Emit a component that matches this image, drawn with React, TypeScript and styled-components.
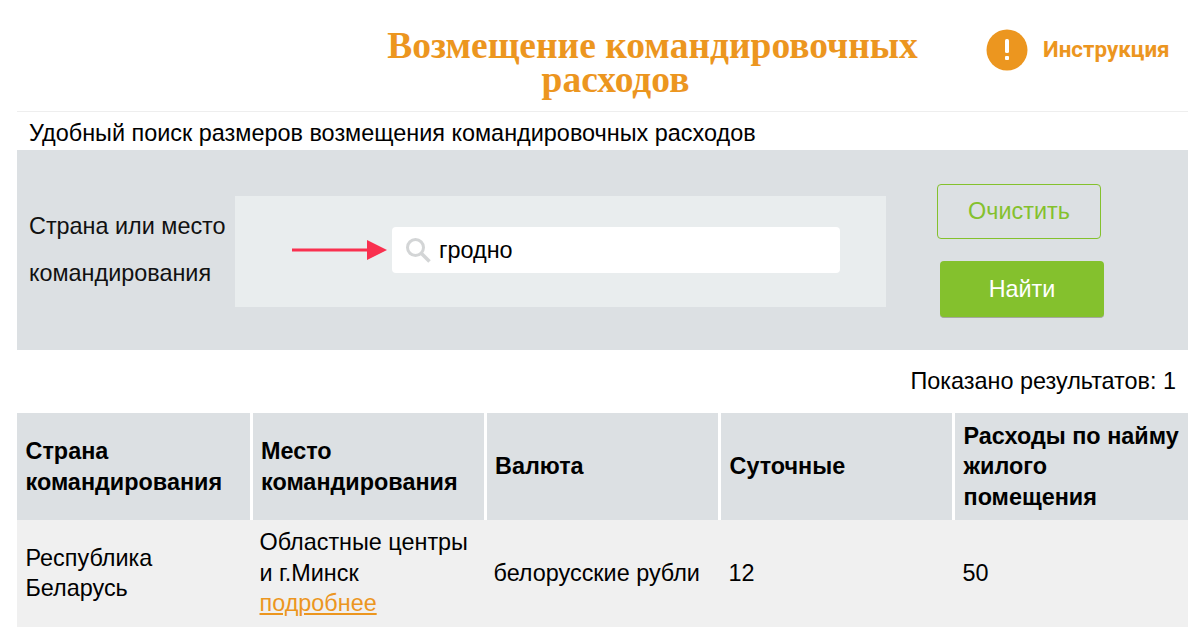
import React from "react";
import styled, { createGlobalStyle } from "styled-components";

const Global = createGlobalStyle`
  html, body { margin: 0; padding: 0; background: #fff; }
  body { font-family: "Liberation Sans", Arial, sans-serif; color: #000; overflow: hidden; }
`;
const Page = styled.div`
  width: 1171px;
  margin-left: 17px;
`;
const Header = styled.header`
  height: 111px;
  border-bottom: 1px solid #eeeeee;
  display: flex;
  box-sizing: content-box;
`;
const Title = styled.h1`
  margin: 29px 0 0 0;
  width: 953px;
  padding-left: 318px;
  box-sizing: border-box;
  text-align: center;
  font: bold 37.5px/34px "Liberation Serif", "Times New Roman", serif;
  color: #ec961f;
`;
const TitleTail = styled.span`
  display: block;
  padding-right: 74px;
`;
const Instruction = styled.a`
  display: flex;
  align-items: center;
  gap: 15px;
  height: 42px;
  margin-top: 29px;
  margin-left: 16px;
  font: bold 22.4px/38px "Roboto", "Liberation Sans", sans-serif;
  color: #ec961f;
`;
const InstructionLabel = styled.span`
  margin-top: -2px;
`;
const Subtitle = styled.div`
  font-size: 23.43px;
  line-height: 42px;
  padding-left: 12px;
  height: 38px;
`;
const SearchPanel = styled.section`
  background: #dce0e3;
  height: 200px;
  padding-top: 2px;
  display: flex;
  align-items: center;
  box-sizing: border-box;
`;
const Label = styled.label`
  width: 218px;
  padding: 0 0 2px 12px;
  box-sizing: border-box;
  font-size: 23.4px;
  line-height: 47px;
  color: #111;
`;
const InputArea = styled.div`
  width: 651px;
  height: 111px;
  background: #e9edee;
  display: flex;
  align-items: center;
  gap: 5px;
  padding: 0 0 2px 57px;
  box-sizing: border-box;
`;
const InputBox = styled.div`
  width: 448px;
  height: 46px;
  background: #fff;
  border-radius: 4px;
  display: flex;
  align-items: center;
  gap: 8px;
  padding-left: 13px;
  box-sizing: border-box;
  font-size: 23.4px;
`;
const Buttons = styled.div`
  display: flex;
  flex-direction: column;
  margin-left: 51px;
  height: 134px;
`;
const ClearButton = styled.button`
  width: 164px;
  height: 55px;
  background: transparent;
  border: 1px solid #84c12d;
  border-radius: 4px;
  color: #84c12d;
  font: 23.4px "Liberation Sans", sans-serif;
`;
const FindButton = styled.button`
  width: 164px;
  height: 57px;
  margin: 22px 0 0 3px;
  background: #84c12d;
  border: 0;
  border-bottom: 1px solid #a5a89e;
  border-radius: 4px;
  color: #fff;
  font: 23.4px "Liberation Sans", sans-serif;
`;
const Results = styled.div`
  height: 63px;
  font-size: 23.4px;
  line-height: 62px;
  text-align: right;
  padding-right: 12px;
`;
const Table = styled.table`
  width: 1171px;
  table-layout: fixed;
  border-collapse: separate;
  border-spacing: 0;
  font-size: 23.4px;
  line-height: 30.5px;
`;
const Column = styled.col<{ $w: number }>`
  width: ${(p) => p.$w}px;
`;
const HeadCell = styled.th`
  background: #dce0e3;
  height: 107px;
  padding: 0 6px 0 8.5px;
  text-align: left;
  font-weight: bold;
  border-right: 3px solid #fff;
  box-sizing: border-box;
  &:nth-child(2), &:nth-child(3) { padding-left: 8px; }
  &:last-child { border-right: 0; }
`;
const Cell = styled.td`
  background: #f0f0f0;
  height: 107px;
  padding: 0 6px 0 8.5px;
  box-sizing: border-box;
  &:nth-child(-n + 2) { padding-bottom: 1px; }
  &:nth-child(2), &:nth-child(3) { padding-left: 6.5px; }
  &:nth-child(n + 4) { padding-left: 7.5px; }
`;
const MoreLink = styled.a`
  color: #ec961f;
  text-decoration: underline;
`;

export default function App() {
  return (
    <Page>
      <Global />
      <Header>
        <Title>
          Возмещение командировочных
          <TitleTail>расходов</TitleTail>
        </Title>
        <Instruction>
          <svg width="42" height="42" viewBox="0 0 42 42">
            <circle cx="21" cy="21" r="20.5" fill="#ec961f" />
            <rect x="19" y="10" width="4" height="14" rx="1.5" fill="#fff" />
            <rect x="19" y="27" width="4" height="4" rx="1" fill="#fff" />
          </svg>
          <InstructionLabel>Инструкция</InstructionLabel>
        </Instruction>
      </Header>
      <Subtitle>Удобный поиск размеров возмещения командировочных расходов</Subtitle>
      <SearchPanel>
        <Label>Страна или место командирования</Label>
        <InputArea>
          <svg width="95" height="20" viewBox="0 0 95 20">
            <rect x="0" y="8.5" width="76" height="3" fill="#f9304f" />
            <polygon points="75,0 95,10 75,20" fill="#f9304f" />
          </svg>
          <InputBox>
            <svg width="26" height="26" viewBox="0 0 26 26" fill="none" stroke="#d3d5d6">
              <circle cx="10.5" cy="10.5" r="8" strokeWidth="3" />
              <path d="M16.5 16.5 L24.5 24.5" strokeWidth="3.5" />
            </svg>
            гродно
          </InputBox>
        </InputArea>
        <Buttons>
          <ClearButton>Очистить</ClearButton>
          <FindButton>Найти</FindButton>
        </Buttons>
      </SearchPanel>
      <Results>Показано результатов: 1</Results>
      <Table>
        <colgroup>
          <Column $w={236} />
          <Column $w={234} />
          <Column $w={234} />
          <Column $w={234} />
          <Column $w={233} />
        </colgroup>
        <thead>
          <tr>
            <HeadCell>Страна командирования</HeadCell>
            <HeadCell>Место командирования</HeadCell>
            <HeadCell>Валюта</HeadCell>
            <HeadCell>Суточные</HeadCell>
            <HeadCell>Расходы по найму жилого помещения</HeadCell>
          </tr>
        </thead>
        <tbody>
          <tr>
            <Cell>Республика Беларусь</Cell>
            <Cell>Областные центры и г.Минск <MoreLink href="#">подробнее</MoreLink></Cell>
            <Cell>белорусские рубли</Cell>
            <Cell>12</Cell>
            <Cell>50</Cell>
          </tr>
        </tbody>
      </Table>
    </Page>
  );
}
